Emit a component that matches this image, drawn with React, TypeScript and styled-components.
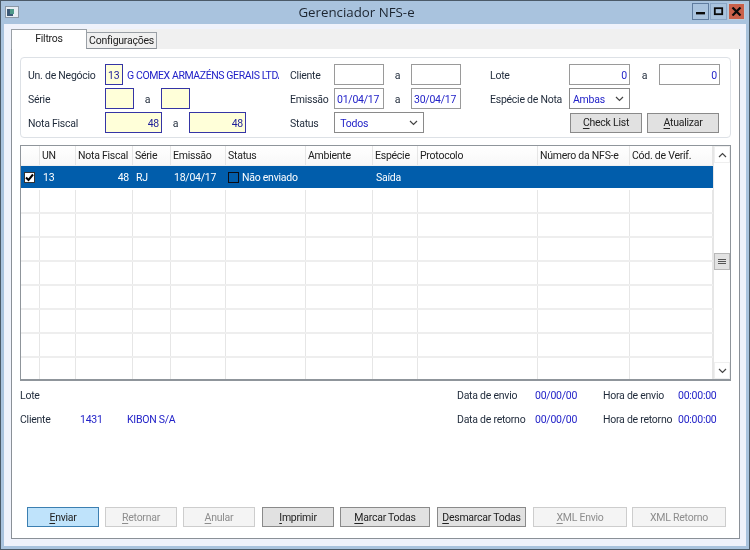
import React from "react";
import styled, { createGlobalStyle } from "styled-components";

const Global = createGlobalStyle`
  html, body { margin: 0; padding: 0; background: #a9c3de; }
  * { box-sizing: border-box; }
`;

const Win = styled.div`
  width: 750px; height: 550px; display: flex; flex-direction: column;
  background: #a9c3de; border: 1px solid #4b5a68; overflow: hidden;
  font-family: Roboto, "Liberation Sans", sans-serif; font-size: 10.5px; letter-spacing: -0.25px; color: #222;
  filter: blur(0.25px);
`;
const TitleBar = styled.div`
  height: 23px; flex: none; display: flex; align-items: center; padding: 0 4px 2px 4px;
`;
const Title = styled.div`
  flex: 1; text-align: center; font-family: "Open Sans", sans-serif; font-size: 13.3px; letter-spacing: 0; color: #1c2530; padding-left: 3px;
`;
const WinBtn = styled.div<{ $close?: boolean; $strong?: boolean }>`
  width: 17px; height: 17px; margin-left: 1px; display: flex; align-items: center; justify-content: center;
  background: ${p => p.$close ? "#c9604a" : "#a9c3de"};
  border: 1px solid ${p => p.$close ? "#b9c9d9" : p.$strong ? "#5f7c9f" : "#8aa6c6"};
`;
const Body = styled.div`
  flex: 1; display: flex; flex-direction: column; margin: 0 3px 3px 3px;
  background: #eff2fb; padding: 5px 6px 7px 7px; min-height: 0;
`;
const TabStrip = styled.div`
  height: 20px; flex: none; display: flex; align-items: flex-end; position: relative; z-index: 1; background: #f0f0f0;
`;
const Tab = styled.div<{ $active?: boolean; $w: number }>`
  width: ${p => p.$w}px; height: ${p => p.$active ? 20 : 17}px;
  background: ${p => p.$active ? "#fff" : "#f0f0f0"};
  border: 1px solid #9aa0a6; border-bottom: ${p => p.$active ? "none" : "1px solid #8a9097"};
  margin-left: ${p => p.$active ? "0" : "-1px"};
  display: flex; align-items: center; justify-content: center; color: #222;
  padding-bottom: ${p => p.$active ? 3 : 0}px;
`;
const Panel = styled.div`
  flex: 1; background: #fff; border: 1px solid #8a9097; margin: -1px 0 0 0; display: flex; flex-direction: column;
  padding: 8px 8px 9px 8px; min-height: 0;
`;
const FilterBox = styled.div`
  height: 81px; flex: none; border: 1px solid #dde1e6; border-radius: 4px; display: flex; padding: 6px 0 0 7px;
`;
const Col = styled.div<{ $w: number }>`
  width: ${p => p.$w}px; flex: none; display: flex; flex-direction: column; gap: 3px;
`;
const Row = styled.div`
  height: 21px; display: flex; align-items: center;
`;
const Label = styled.div<{ $w: number }>`
  width: ${p => p.$w}px; flex: none; color: #1f2a3a; white-space: nowrap; padding-top: 1px;
`;
const Sep = styled.div<{ $w: number }>`
  width: ${p => p.$w}px; flex: none; text-align: center; color: #1f2a3a; padding-top: 1px;
`;
const Field = styled.div<{ $w: number; $req?: boolean; $right?: boolean }>`
  width: ${p => p.$w}px; height: 21px; flex: none; display: flex; align-items: center;
  justify-content: ${p => p.$right ? "flex-end" : "flex-start"};
  padding: 1px 2px 0; color: ${p => p.$req ? "#1e1e9a" : "#2222c8"};
  background: ${p => p.$req ? "#ffffd9" : "#fff"};
  border: 1px solid ${p => p.$req ? "#3535a5" : "#9a9a9a"};
`;
const Link = styled.div`
  width: 152px; margin-left: 4px; padding-top: 1px; color: #2222c8; white-space: nowrap; overflow: hidden; flex: none; letter-spacing: -0.4px;
`;
const Select = styled.div<{ $w: number }>`
  width: ${p => p.$w}px; height: 21px; flex: none; display: flex; align-items: center; justify-content: space-between;
  border: 1px solid #8a8a8a; padding: 1px 5px 0 3px; color: #2222c8; background: #fff;
`;
const ActionBtn = styled.div<{ $w: number; $disabled?: boolean; $primary?: boolean }>`
  width: ${p => p.$w}px; height: 20px; flex: none; display: flex; align-items: center; justify-content: center;
  white-space: nowrap;
  background: ${p => p.$primary ? "#bfe3fb" : p.$disabled ? "#f4f4f4" : "#e1e1e1"};
  border: 1px solid ${p => p.$primary ? "#3c7fb1" : p.$disabled ? "#cdcdcd" : "#8a8a8a"};
  color: ${p => p.$disabled ? "#8d8d8d" : "#222"};
  u { text-underline-offset: 2px; }
`;
const BtnPair = styled.div`
  display: flex; gap: 5px; margin-left: 1px;
`;
const Grid = styled.div`
  height: 236px; flex: none; margin-top: 7px; border: 1px solid #8f959b; border-bottom-width: 2px;
  display: flex; overflow: hidden;
`;
const Table = styled.div`
  flex: 1; display: flex; flex-direction: column; min-width: 0;
`;
const Line = styled.div<{ $kind?: "head" | "sel" }>`
  display: grid; grid-template-columns: 19px 36px 57px 38px 55px 80px 67px 45px 120px 92px 1fr;
  height: ${p => p.$kind === "head" ? "20px" : "24px"}; flex: none;
  background: ${p => p.$kind === "sel" ? "#015dab" : "#fff"};
  color: ${p => p.$kind === "sel" ? "#fff" : "#222"};
  border-bottom: ${p => p.$kind === "sel" ? "2px solid #fff" : p.$kind === "head" ? "1px solid #f0f0f0" : "2px solid #eeeeee"};
`;
const Cell = styled.div<{ $right?: boolean; $kind?: "head" | "sel" }>`
  display: flex; align-items: center; padding: 0 ${p => p.$right ? 4 : 3}px 0 3px; white-space: nowrap; overflow: hidden; gap: 3px;
  justify-content: ${p => p.$right ? "flex-end" : "flex-start"};
  border-right: ${p => p.$kind === "sel" ? "0" : "1px solid #e6e6e6"};
`;
const HeadCell = styled(Cell)`
  background: linear-gradient(#ffffff, #f8f8f8);
  padding-left: 2px;
`;
const Check = styled.div`
  width: 11px; height: 11px; background: #fff; border: 1px solid #333; display: flex; align-items: center; justify-content: center;
`;
const Square = styled.div`
  width: 11px; height: 11px; border: 1px solid #0c0c14; flex: none; background: #015dab; margin-left: -1px;
`;
const Scroll = styled.div`
  width: 17px; flex: none; border-left: 1px solid #e6e6e6; display: flex; flex-direction: column; background: #fff;
`;
const ScrollEnd = styled.div`
  height: 17px; display: flex; align-items: center; justify-content: center; flex: none; border: 1px solid #efefef;
`;
const ScrollTrack = styled.div`
  flex: 1; display: flex; flex-direction: column; justify-content: center; padding-bottom: 2px;
`;
const Thumb = styled.div`
  height: 17px; background: #e2e2e2; border: 1px solid #b8b8b8; display: flex; flex-direction: column; gap: 1px;
  align-items: center; justify-content: center;
  i { display: block; width: 8px; height: 1px; background: #555; }
`;
const InfoWrap = styled.div`
  display: flex; flex-direction: column; gap: 9px; margin-top: 7px;
`;
const InfoRow = styled.div`
  height: 15px; display: flex; align-items: center; white-space: nowrap;
`;
const InfoLabel = styled.div<{ $w: number }>`
  width: ${p => p.$w}px; flex: none; color: #1f2a3a;
`;
const InfoValue = styled.div<{ $w: number }>`
  width: ${p => p.$w}px; flex: none; color: #2222c8;
`;
const Footer = styled.div`
  margin-top: auto; margin-bottom: 2px; display: flex; padding-left: 7px;
`;
const FootBtn = styled(ActionBtn)<{ $ml: number }>`
  margin-left: ${p => p.$ml}px;
`;

const Chevron = ({ up }: { up?: boolean }) => (
  <svg width="9" height="6" viewBox="0 0 9 6" fill="none">
    <path d={up ? "M1 5 L4.5 1.5 L8 5" : "M1 1 L4.5 4.5 L8 1"} stroke="#444" strokeWidth="1.2" />
  </svg>
);

const cols = ["", "UN", "Nota Fiscal", "Série", "Emissão", "Status", "Ambiente", "Espécie", "Protocolo", "Número da NFS-e", "Cód. de Verif."];

const buttons: { ml: number; w: number; u: string; rest: string; disabled?: boolean; primary?: boolean }[] = [
  { ml: 0, w: 72, u: "E", rest: "nviar", primary: true },
  { ml: 6, w: 72, u: "R", rest: "etornar", disabled: true },
  { ml: 6, w: 72, u: "A", rest: "nular", disabled: true },
  { ml: 7, w: 72, u: "I", rest: "mprimir" },
  { ml: 6, w: 90, u: "M", rest: "arcar Todas" },
  { ml: 7, w: 89, u: "D", rest: "esmarcar Todas" },
  { ml: 7, w: 94, u: "X", rest: "ML Envio", disabled: true },
  { ml: 5, w: 94, u: "", rest: "XML Retorno", disabled: true },
];

export default function App() {
  return (
    <Win>
      <Global />
      <TitleBar>
        <svg width="14" height="12" viewBox="0 0 14 12">
          <rect x="0.5" y="0.5" width="13" height="11" fill="#e8eef4" stroke="#8a98a6" />
          <rect x="2" y="3" width="6" height="7" fill="#3c5a78" />
          <rect x="5" y="3" width="4" height="5" fill="#4f9a8a" />
        </svg>
        <Title>Gerenciador NFS-e</Title>
        <WinBtn $strong><svg width="11" height="9"><rect x="1" y="5" width="9" height="2.4" fill="#0a0a0a" /></svg></WinBtn>
        <WinBtn><svg width="11" height="9"><rect x="1.8" y="1.2" width="7.4" height="6" fill="none" stroke="#0a0a0a" strokeWidth="1.8" /></svg></WinBtn>
        <WinBtn $close><svg width="11" height="9"><path d="M1.5 0.5 L9.5 8.5 M9.5 0.5 L1.5 8.5" stroke="#0a0a0a" strokeWidth="2.2" /></svg></WinBtn>
      </TitleBar>
      <Body>
        <TabStrip>
          <Tab $active $w={76}>Filtros</Tab>
          <Tab $w={71}>Configurações</Tab>
        </TabStrip>
        <Panel>
          <FilterBox>
            <Col $w={262}>
              <Row><Label $w={77}>Un. de Negócio</Label><Field $w={18} $req>13</Field><Link>G COMEX ARMAZÉNS GERAIS LTDA</Link></Row>
              <Row><Label $w={77}>Série</Label><Field $w={29} $req /><Sep $w={27}>a</Sep><Field $w={29} $req /></Row>
              <Row><Label $w={77}>Nota Fiscal</Label><Field $w={57} $req $right>48</Field><Sep $w={27}>a</Sep><Field $w={57} $req $right>48</Field></Row>
            </Col>
            <Col $w={200}>
              <Row><Label $w={44}>Cliente</Label><Field $w={50} /><Sep $w={27}>a</Sep><Field $w={50} /></Row>
              <Row><Label $w={44}>Emissão</Label><Field $w={50}>01/04/17</Field><Sep $w={27}>a</Sep><Field $w={50}>30/04/17</Field></Row>
              <Row><Label $w={44}>Status</Label><Select $w={90}><span>&nbsp;Todos</span><Chevron /></Select></Row>
            </Col>
            <Col $w={232}>
              <Row><Label $w={79}>Lote</Label><Field $w={61} $right>0</Field><Sep $w={29}>a</Sep><Field $w={61} $right>0</Field></Row>
              <Row><Label $w={79}>Espécie de Nota</Label><Select $w={61}><span>Ambas</span><Chevron /></Select></Row>
              <Row>
                <Label $w={79} />
                <BtnPair>
                  <ActionBtn $w={72}><span><u>C</u>heck List</span></ActionBtn>
                  <ActionBtn $w={72}><span><u>A</u>tualizar</span></ActionBtn>
                </BtnPair>
              </Row>
            </Col>
          </FilterBox>
          <Grid>
            <Table>
              <Line $kind="head">
                {cols.map((c, i) => <HeadCell key={i}>{c}</HeadCell>)}
              </Line>
              <Line $kind="sel">
                <Cell $kind="sel"><Check><svg width="9" height="9" viewBox="0 0 9 9"><path d="M1 4.5 L3.5 7 L8 1.5" fill="none" stroke="#000" strokeWidth="2" /></svg></Check></Cell>
                <Cell $kind="sel">13</Cell>
                <Cell $kind="sel" $right>48</Cell>
                <Cell $kind="sel">RJ</Cell>
                <Cell $kind="sel">18/04/17</Cell>
                <Cell $kind="sel"><Square />Não enviado</Cell>
                <Cell $kind="sel" />
                <Cell $kind="sel">Saída</Cell>
                <Cell $kind="sel" /><Cell $kind="sel" /><Cell $kind="sel" />
              </Line>
              {Array.from({ length: 8 }).map((_, r) => (
                <Line key={r}>{cols.map((_, i) => <Cell key={i} />)}</Line>
              ))}
            </Table>
            <Scroll>
              <ScrollEnd><Chevron up /></ScrollEnd>
              <ScrollTrack><Thumb><i /><i /><i /></Thumb></ScrollTrack>
              <ScrollEnd><Chevron /></ScrollEnd>
            </Scroll>
          </Grid>
          <InfoWrap>
            <InfoRow>
              <InfoLabel $w={437}>Lote</InfoLabel>
              <InfoLabel $w={78}>Data de envio</InfoLabel><InfoValue $w={68}>00/00/00</InfoValue>
              <InfoLabel $w={75}>Hora de envio</InfoLabel><InfoValue $w={50}>00:00:00</InfoValue>
            </InfoRow>
            <InfoRow>
              <InfoLabel $w={60}>Cliente</InfoLabel><InfoValue $w={47}>1431</InfoValue><InfoValue $w={330}>KIBON S/A</InfoValue>
              <InfoLabel $w={78}>Data de retorno</InfoLabel><InfoValue $w={68}>00/00/00</InfoValue>
              <InfoLabel $w={75}>Hora de retorno</InfoLabel><InfoValue $w={50}>00:00:00</InfoValue>
            </InfoRow>
          </InfoWrap>
          <Footer>
            {buttons.map(b => (
              <FootBtn key={b.rest} $ml={b.ml} $w={b.w} $disabled={b.disabled} $primary={b.primary}>
                <span>{b.u && <u>{b.u}</u>}{b.rest}</span>
              </FootBtn>
            ))}
          </Footer>
        </Panel>
      </Body>
    </Win>
  );
}
